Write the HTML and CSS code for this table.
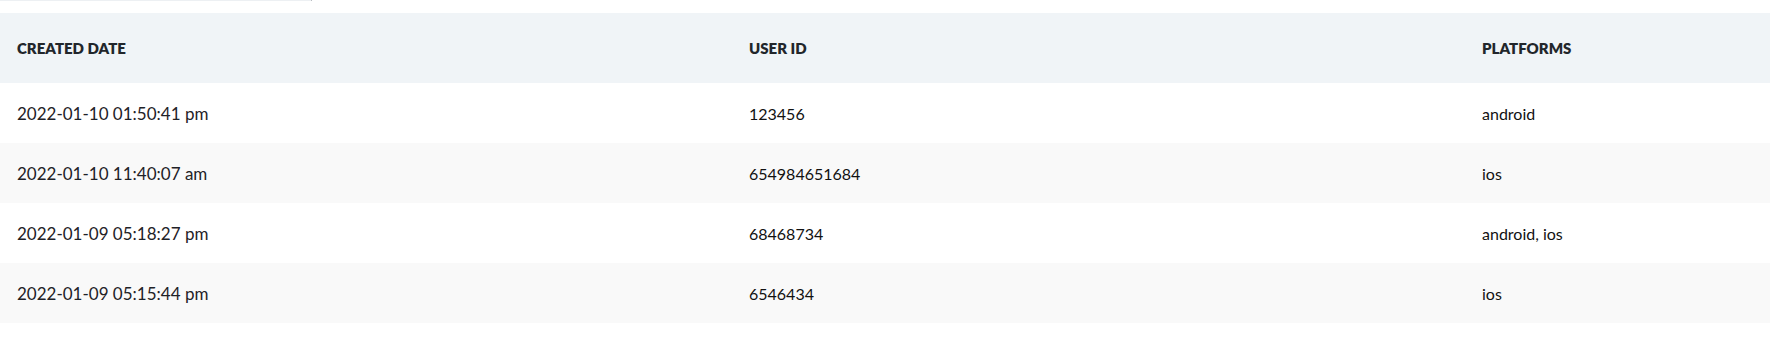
FILE: index.html
```html
<!DOCTYPE html>
<html lang="en">
  <head>
    <meta charset="UTF-8" />
    <meta name="viewport" content="width=device-width, initial-scale=1.0" />
    <title>Devices</title>
    <link rel="stylesheet" href="styles.css">
  </head>
  <body>
    <div class="filter-edge"></div>
    <table class="devices">
      <thead>
        <tr>
          <th class="col-date">Created Date</th>
          <th class="col-user">User ID</th>
          <th>Platforms</th>
        </tr>
      </thead>
      <tbody>
        <tr>
          <td class="date">2022-01-10 01:50:41 pm</td>
          <td>123456</td>
          <td>android</td>
        </tr>
        <tr>
          <td class="date">2022-01-10 11:40:07 am</td>
          <td>654984651684</td>
          <td>ios</td>
        </tr>
        <tr>
          <td class="date">2022-01-09 05:18:27 pm</td>
          <td>68468734</td>
          <td>android, ios</td>
        </tr>
        <tr>
          <td class="date">2022-01-09 05:15:44 pm</td>
          <td>6546434</td>
          <td>ios</td>
        </tr>
      </tbody>
    </table>
  </body>
</html>
```

FILE: styles.css
```css
body {
  margin: 0;
  font-family: Lato, "Open Sans", sans-serif;
  color: #1d2125;
  background-color: #ffffff;
}

.filter-edge {
  width: 311px;
  height: 1px;
  background-color: #edf0f3;
  border-right: 1px solid #b9bdc2;
  margin-bottom: 12px;
}

.devices {
  width: 100%;
  border-collapse: collapse;
  table-layout: fixed;
}

.devices th {
  height: 70px;
  padding: 0 17px;
  text-align: left;
  font-size: 15px;
  font-weight: 800;
  text-transform: uppercase;
  color: #22262b;
  background-color: #f0f4f7;
}

.col-date {
  width: 698px;
}

.col-user {
  width: 699px;
}

.devices td {
  height: 60px;
  padding: 0 17px;
  font-size: 16px;
  color: #111111;
}

.devices td.date {
  font-size: 17px;
  color: #1f2227;
}

.devices tbody tr:nth-child(even) td {
  background-color: #f9f9f9;
}
```
